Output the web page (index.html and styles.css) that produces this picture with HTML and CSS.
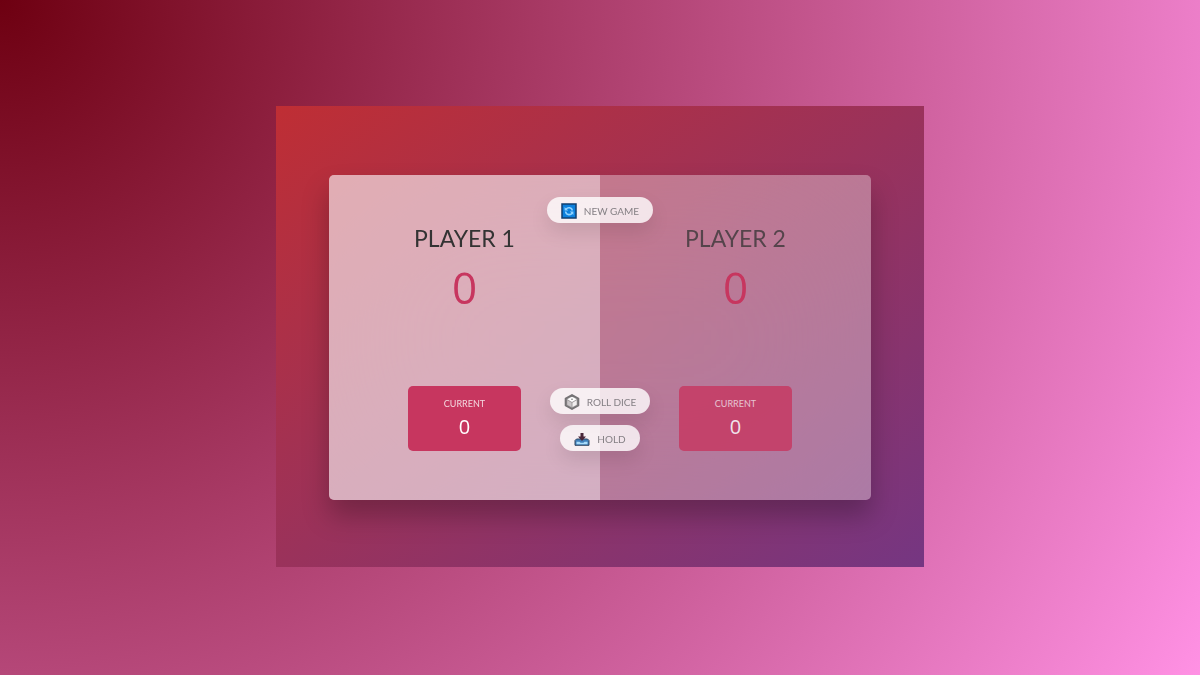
FILE: index.html
```html
<!DOCTYPE html>
<html lang="en">
<head>
<meta charset="utf-8">
<meta name="viewport" content="width=device-width, initial-scale=1">
<title>Pig Game</title>
<link rel="stylesheet" href="styles.css">
</head>
<body class="page">
<div class="frame">
  <main class="board">
    <section class="player player--active">
      <h2 class="name">Player 1</h2>
      <p class="score">0</p>
      <div class="current">
        <p class="current-label">Current</p>
        <p class="current-score">0</p>
      </div>
    </section>
    <section class="player">
      <h2 class="name">Player 2</h2>
      <p class="score">0</p>
      <div class="current">
        <p class="current-label">Current</p>
        <p class="current-score">0</p>
      </div>
    </section>
    <div class="actions actions--top">
      <button class="btn" type="button">
        <svg class="icon" viewBox="0 0 16 16" aria-hidden="true">
          <rect x="1" y="1" width="14" height="14" fill="#0d80dc" stroke="#123f70" stroke-width="1.500"/>
          <path d="M4.600 8.500a3.500 3.500 0 0 0 6.800 0.700M11.400 7.500a3.500 3.500 0 0 0-6.300-1.300" fill="none" stroke="#8fd2ff" stroke-width="1.600"/>
          <path d="M3.600 4v3.600h3.600zM12.400 12V8.400H8.800z" fill="#8fd2ff"/>
        </svg>
        New game
      </button>
    </div>
    <div class="actions actions--bottom">
      <button class="btn" type="button">
        <svg class="icon" viewBox="0 0 16 16" aria-hidden="true">
          <path d="M8 1 14.300 4.500v7L8 15 1.700 11.500v-7z" fill="#a09c9e" stroke="#757375" stroke-width="2" stroke-linejoin="round"/>
          <path d="M8 2.800 12.600 5.300 8 8 3.400 5.300z" fill="#fff"/>
          <path d="M3.300 6.300 7.500 8.700v4.200L3.300 10.700z" fill="#c9c5c7"/>
          <path d="M12.700 6.300 8.500 8.700v4.200l4.200-2.200z" fill="#f2eff0"/>
          <circle cx="8" cy="5.200" r="0.800" fill="#777"/>
        </svg>
        Roll dice
      </button>
      <button class="btn" type="button">
        <svg class="icon" viewBox="0 0 16 16" aria-hidden="true">
          <path d="M2.500 8h11l1.500 1.500v4.800H1V9.500z" fill="#3f7fba" stroke="#33465f" stroke-linejoin="round"/>
          <path d="M2.500 10.800h3l1 1h3l1-1h3v2.500h-11z" fill="#a9dcfa"/>
          <path d="M6.500 2h3v3.500H12L8 10 4 5.500h2.500z" fill="#492638"/>
        </svg>
        Hold
      </button>
    </div>
  </main>
</div>
</body>
</html>
```
FILE: styles.css
```css
* {
  box-sizing: border-box;
  margin: 0;
}

.page {
  min-height: 100vh;
  display: grid;
  place-items: center;
  padding: 24px 24px 26px;
  font-family: Lato, "Open Sans", sans-serif;
  color: #333;
  background: radial-gradient(circle farthest-corner at 0 0, #6e0011, #ff91e4) no-repeat;
}

.frame {
  width: 54vw;
  min-width: 480px;
  padding: 69px 53px 67px;
  background: linear-gradient(to top left, #753682, #bf2e34);
}

.board {
  position: relative;
  display: flex;
  border-radius: 5px;
  background: rgba(255, 255, 255, 0.35);
  backdrop-filter: blur(80px);
  box-shadow: 0 16px 27px rgba(0, 0, 0, 0.25);
}

.player {
  flex: 1;
  min-height: 325px;
  display: flex;
  flex-direction: column;
  align-items: center;
  padding: 48px 42px 49px;
  border-radius: 0 5px 5px 0;
}

.player--active {
  border-radius: 5px 0 0 5px;
  background: rgba(255, 255, 255, 0.4);
}

.name {
  font-size: 23px;
  line-height: 30px;
  font-weight: 400;
  text-transform: uppercase;
  opacity: 0.75;
}

.score {
  margin-top: 8px;
  font-family: "Open Sans", sans-serif;
  font-size: 44px;
  line-height: 52px;
  font-weight: 400;
  color: #c7365f;
}

.current {
  width: 60%;
  margin-top: auto;
  padding: 10px 8px 12px;
  border-radius: 5px;
  text-align: center;
  color: #fff;
  background: #c7365f;
  opacity: 0.8;
}

.player--active .name,
.player--active .current {
  opacity: 1;
}

.current-label {
  font-size: 9px;
  line-height: 16px;
  text-transform: uppercase;
  opacity: 0.8;
}

.current-score {
  margin-top: 2px;
  font-family: "Open Sans", sans-serif;
  font-size: 20px;
  line-height: 25px;
}

.actions {
  position: absolute;
  left: 0;
  right: 0;
  display: flex;
  flex-direction: column;
  align-items: center;
  gap: 11px;
  pointer-events: none;
}

.actions--top {
  top: 22px;
}

.actions--bottom {
  bottom: 49px;
}

.btn {
  display: flex;
  align-items: center;
  gap: 7px;
  padding: 6px 14px 4px;
  border: 0;
  border-radius: 13px;
  font-family: inherit;
  font-size: 10px;
  line-height: 16px;
  text-transform: uppercase;
  color: #858085;
  background: rgba(255, 255, 255, 0.8);
  box-shadow: 0 9px 19px rgba(0, 0, 0, 0.1);
  cursor: pointer;
  pointer-events: auto;
}

.icon {
  width: 16px;
  height: 16px;
}
```
